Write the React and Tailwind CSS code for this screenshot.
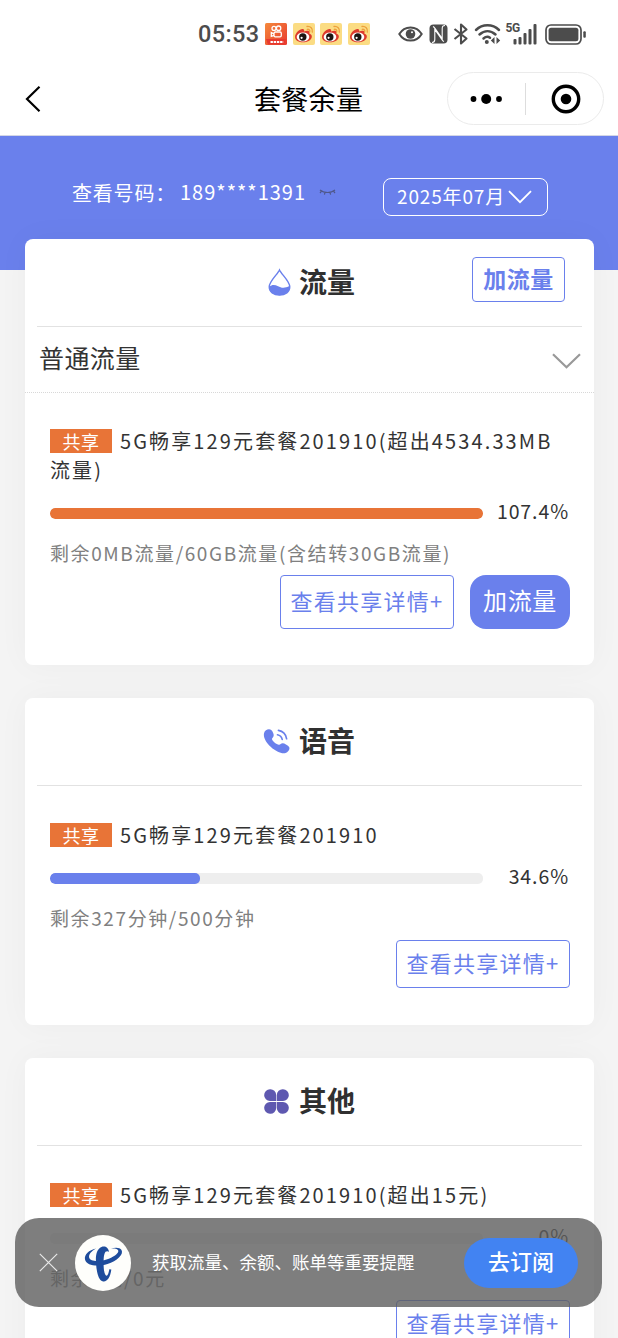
import React from "react";

const FONT = "font-['Noto_Sans_CJK_SC',sans-serif]";

function KuaishouIcon() {
  return (
    <svg className="h-[22px] w-[22px]" viewBox="0 0 22 22">
      <defs>
        <linearGradient id="ks" x1="0" y1="0" x2="1" y2="1">
          <stop offset="0" stopColor="#f58a3c" />
          <stop offset="1" stopColor="#e8392f" />
        </linearGradient>
      </defs>
      <rect width="22" height="22" rx="1.5" fill="url(#ks)" />
      <g fill="none" stroke="#fff" strokeWidth="1.3">
        <circle cx="9" cy="5.400" r="2" />
        <circle cx="13.600" cy="5.200" r="2.200" />
        <rect x="9" y="9" width="7.300" height="4.800" rx="1.300" />
        <path d="M9 10.800 6.300 9.600v3.800L9 12.300" />
      </g>
      <path d="M1 16h20l-2 5.500H3z" fill="#e8392f" />
      <path d="M5.500 19h13" stroke="#fff" strokeWidth="2.200" strokeDasharray="2.400 .8" />
    </svg>
  );
}

function WeiboIcon() {
  return (
    <svg className="h-[22px] w-[22px]" viewBox="0 0 22 22">
      <rect width="22" height="22" rx="2" fill="#fbdc83" />
      <path d="M2 14c0-4 5-8.500 8-8 1.500.3 1.300 1.800 1 2.500 2-1 5-1.500 5.500.5.200 1-.1 1.500-.1 1.800 2 .7 2.600 1.700 2.400 3.200C18.300 17.500 14 19.300 10 19.300S2 17.500 2 14z" fill="#dd3a2c" />
      <ellipse cx="10" cy="14" rx="6.300" ry="4.500" fill="#fff" />
      <circle cx="9.800" cy="14" r="3.700" fill="#1c1512" />
      <circle cx="8.600" cy="14.800" r="1.100" fill="#fff" />
      <path d="M14 3.500c3.500-.5 6 2 5.300 5.500M14.300 6.300c1.700-.2 2.700.8 2.400 2.300" fill="none" stroke="#eda03c" strokeWidth="1.300" strokeLinecap="round" />
    </svg>
  );
}

function StatusBar() {
  return (
    <div className="flex h-[68px] items-center pl-[198px] text-[#4c4c4c]">
      <span className="w-[67px] pt-[1px] font-[Roboto,sans-serif] text-[23.500px] font-medium tracking-[0.400px]">05:53</span>
      <div className="flex items-center gap-[5.500px]">
        <KuaishouIcon />
        <WeiboIcon />
        <WeiboIcon />
        <WeiboIcon />
      </div>
      <svg className="ml-[28px] h-[18px] w-[25px]" viewBox="0 0 25 18" fill="none" stroke="currentColor" strokeWidth="2">
        <path d="M1.300 9C6.500.2 18.500.2 23.700 9 18.500 17.800 6.500 17.800 1.300 9z" />
        <circle cx="12.500" cy="9" r="4.800" fill="currentColor" stroke="none" />
        <circle cx="14" cy="7.300" r="1" fill="#fff" stroke="none" />
      </svg>
      <svg className="ml-[6px] h-[20px] w-[19px]" viewBox="0 0 19 20">
        <rect x=".5" y=".5" width="18" height="19" rx="4" fill="currentColor" />
        <path d="M3 18.500c1.800 0 2.800-.8 2.800-3V5.500l6.700 9.500c1 1.400 1.300 2 2.500 2.500M16 1.500c-1.800 0-2.800.8-2.800 3v10L6.500 5C5.500 3.600 5.200 3 4 2.500" fill="none" stroke="#fff" strokeWidth="1.100" />
      </svg>
      <svg className="ml-[5px] h-[22px] w-[16px]" viewBox="0 0 16 22" fill="none" stroke="currentColor" strokeWidth="2.100" strokeLinejoin="round">
        <path d="M1.500 6 13.500 15.500 8 20.500v-19l5.500 5L1.500 16" />
      </svg>
      <svg className="ml-[5px] h-[22px] w-[27px]" viewBox="0 0 27 22" fill="none" stroke="currentColor" strokeWidth="2.500" strokeLinecap="round">
        <path d="M2 7C8.500.7 18.500.7 25 7M5.500 11.500c5-4.500 11-4.500 16 0M9.500 15.500c2.300-2 4.500-2.200 6.500-.8" />
        <circle cx="12.800" cy="19" r="2" fill="currentColor" stroke="none" />
        <path d="M20.500 14v7l-3.700-3.500zM22.500 14v7l3.700-3.500z" fill="currentColor" stroke="none" />
      </svg>
      <div className="relative ml-[4px] h-[22px] w-[32px]">
        <span className="absolute -top-[1px] left-px font-[Roboto,sans-serif] text-[12px] leading-[12px] font-bold tracking-[-0.500px]">5G</span>
        <svg className="h-[22px] w-[32px]" viewBox="0 0 32 22" fill="currentColor">
          <rect x="8.500" y="16" width="3" height="5.500" rx="1" />
          <rect x="13.500" y="14" width="3" height="7.500" rx="1" />
          <rect x="18.500" y="10" width="3" height="11.500" rx="1" />
          <rect x="23.500" y="6" width="3" height="15.500" rx="1" />
          <rect x="28.500" y="1" width="3" height="20.500" rx="1" />
        </svg>
      </div>
      <svg className="ml-[8px] h-[21px] w-[42px]" viewBox="0 0 42 21">
        <rect x="1" y="1" width="35" height="19" rx="5" fill="none" stroke="currentColor" strokeWidth="1.700" />
        <rect x="3.600" y="3.800" width="29.800" height="13.400" rx="2.500" fill="currentColor" />
        <rect x="38.300" y="7.300" width="2.500" height="6.500" rx="1" fill="currentColor" />
      </svg>
    </div>
  );
}

function NavBar() {
  return (
    <div className="flex h-[68px] items-start border-b border-[#d3d6e6]">
      <svg className="mt-[17px] ml-[25px] h-[28px] w-[17px]" viewBox="0 0 17 28" fill="none" stroke="#000" strokeWidth="2.200">
        <path d="M14.500 1.800 2 14l12.500 12.200" />
      </svg>
      <h1 className="mt-[11px] ml-[212px] w-[193px] text-[27px] leading-[40px] tracking-[0.300px] text-black">套餐余量</h1>
      <div className="mt-[4px] flex h-[53px] w-[157px] items-center rounded-full border border-[#ebebeb]">
        <svg className="h-[20px] w-[77px]" viewBox="0 0 77 20" fill="#000">
          <circle cx="25.500" cy="10" r="2.900" />
          <circle cx="38.200" cy="10" r="5" />
          <circle cx="51" cy="10" r="2.900" />
        </svg>
        <span className="h-[32px] w-px bg-[#dddddd]" />
        <svg className="ml-[25px] h-[30px] w-[30px]" viewBox="0 0 30 30">
          <circle cx="15" cy="15" r="12.700" fill="none" stroke="#000" strokeWidth="3.400" />
          <circle cx="15" cy="15" r="5.300" fill="#000" />
        </svg>
      </div>
    </div>
  );
}

function DropIcon() {
  return (
    <svg className="ml-[6px] h-[29px] w-[24px]" viewBox="0 0 24 29">
      <path d="M12 1.500C14 6 22.700 13 22.700 19c0 5.200-4.700 8.700-10.700 8.700S1.300 24.200 1.300 19C1.300 13 10 6 12 1.500z" fill="#fff" stroke="#6a80ec" strokeWidth="1.500" />
      <path d="M1.300 19c3-2.800 6-2.300 9.200-.6s6.500 2.800 12.200-.4c.3 6-4.500 9.700-10.700 9.700S1 24.500 1.300 19z" fill="#6a80ec" />
    </svg>
  );
}

function PhoneIcon() {
  return (
    <svg className="mb-px ml-px h-[26px] w-[28px]" viewBox="0 0 29 27">
      <path d="M1.200 5C2 1.800 6.500.2 8.800 2.400c1.200 1.300 2.300 3.600 2.300 5.100 0 2.200-2.100 2.700-1.800 4.200.6 2.200 4.700 5.400 7.200 5.700 1.500.2 2-1.600 4-1.500 1.700.1 5 1.900 6.400 3.500 1.600 2.100-.5 5.700-3.500 6.500C15.500 28.200-1.800 14 1.200 5z" fill="#6a80ec" />
      <g fill="none" stroke="#6a80ec" strokeWidth="1.700" strokeLinecap="round">
        <path d="M15 7c2.800.6 4.300 2.200 4.900 4.800M16 2.500c4.500.8 7.700 4 8.500 8.700" />
      </g>
    </svg>
  );
}

function CloverIcon() {
  return (
    <svg className="mb-px h-[25px] w-[25px]" viewBox="0 0 25 25" fill="#5e58b0">
      <path d="M6 .3a5.800 5.800 0 0 1 6.200 5.800v5.900H6A5.800 5.800 0 0 1 6 .3z" />
      <path d="M19 .3a5.800 5.800 0 0 0-6.200 5.800v5.900H19A5.800 5.800 0 0 0 19 .3z" />
      <path d="M6 24.700a5.800 5.800 0 0 0 6.200-5.800v-5.900H6a5.800 5.800 0 0 0 0 11.700z" />
      <path d="M19 24.700a5.800 5.800 0 0 1-6.200-5.800v-5.900H19a5.800 5.800 0 0 1 0 11.700z" />
    </svg>
  );
}

function Card({ icon, title, action, children }) {
  return (
    <section className="rounded-[8px] bg-white shadow-[0_0_33px_rgba(0,0,0,0.035)]">
      <div className="mx-[12px] grid h-[88px] grid-cols-[1fr_auto_1fr] items-center border-b border-[#e2e2e2]">
        <span />
        <div className="mr-[2px] flex items-center gap-[8px]">
          <span className="flex w-[29px] justify-center">{icon}</span>
          <h2 className="pb-[3px] text-[28px] leading-[40px] font-bold text-[#303030]">{title}</h2>
        </div>
        <div className="flex justify-end pr-[17px] pb-[6px]">{action}</div>
      </div>
      {children}
    </section>
  );
}

function UsageItem({ name, percent, width, barClass, remaining, children }) {
  return (
    <div className="pr-[24px] pl-[25px]">
      <div className="text-[20px] leading-[29px] tracking-[2.120px] text-[#333]">
        <span className="mt-[3px] mr-[8px] inline-flex h-[24px] w-[62px] items-center justify-center bg-[#e87437] pb-px align-top text-[18px] leading-[24px] tracking-[0.500px] text-white">
          共享
        </span>
        {name}
      </div>
      <div className="mt-[17px] flex h-[24px] items-center justify-between">
        <div className="h-[11px] w-[433px] overflow-hidden rounded-[5px] bg-[#eeeeee]">
          <div className={`h-full rounded-[5px] ${barClass}`} style={{ width }} />
        </div>
        <span className="-mt-[4px] mr-px text-[19.500px] leading-[24px] tracking-[0.900px] text-[#333]">{percent}</span>
      </div>
      <p className="mt-[14px] h-[28px] text-[19px] leading-[28px] tracking-[1.600px] whitespace-nowrap text-[#808080]">{remaining}</p>
      <div className="mt-[8px] flex justify-end gap-[16px]">{children}</div>
    </div>
  );
}

function DetailButton({ className }) {
  return (
    <button className={`w-[174px] rounded-[4px] border-[1.500px] border-[#6a80ec] pb-[3px] text-[22px] tracking-[1.250px] whitespace-nowrap text-[#6a80ec] ${className}`}>
      查看共享详情+
    </button>
  );
}

function SubscribeBar() {
  return (
    <div className="absolute top-[1218px] left-[15px] flex h-[89px] w-[587px] items-center rounded-[24px] bg-[#5e5e5e]/80 text-white">
      <svg className="ml-[24px] h-[19px] w-[19px]" viewBox="0 0 19 19" stroke="#e8e8e8" strokeWidth="1.200">
        <path d="m.8.8 17.400 17.400M18.200.8.8 18.200" />
      </svg>
      <svg className="ml-[17px] h-[56px] w-[56px]" viewBox="0 0 56 56">
        <circle cx="28" cy="28" r="28" fill="#fefefb" />
        <g fill="#1e4c9c">
          <path d="M21 13.500C14 15 9 19.500 10 24.500c1.500 6.500 13 7.500 22.500 4.500C42 26 49 19.500 46.500 15c-1.500-2.600-6-2.800-10.500-1.500 4-.2 7 .3 7.300 2.300.4 3-5.300 6.700-11.800 8.700-7.500 2.200-16 2.300-17.300-1.800C13.300 19.500 16.500 16 21 13.500z" />
          <path d="M34 17c-.3-4.500-4.300-6.500-7.500-5-5 2.300-6 8.500-5.500 16 .5 8.500 2.300 17 6.500 18.200C32 47.500 35.500 42 36.300 34.500l-2-.3c-.5 3.300-1.300 6-2.500 6.500-2.200.3-3.200-5.700-3.200-12.200 0-6 .3-9.500 1.900-11.800 1.500-1 3-.5 3.500.3z" />
        </g>
      </svg>
      <p className="ml-[21px] w-[312px] pb-[2px] text-[17.500px] leading-[26px] whitespace-nowrap">获取流量、余额、账单等重要提醒</p>
      <button className="h-[50px] w-[114px] rounded-full bg-[#4283f2] pb-[4px] text-[22px] font-medium">去订阅</button>
    </div>
  );
}

export default function App() {
  return (
    <div className={`relative h-[1338px] w-[618px] overflow-hidden bg-[#f4f4f4] ${FONT}`}>
      <header className="bg-white">
        <StatusBar />
        <NavBar />
      </header>
      <div className="flex h-[134px] items-start bg-[#6a80ec] text-white">
        <p className="mt-[42px] ml-[72px] w-[108px] text-[20px] leading-[30px] tracking-[0.800px] whitespace-nowrap">查看号码：</p>
        <p className="mt-[41px] w-[133px] text-[20px] leading-[30px] tracking-[1px]">189****1391</p>
        <svg className="mt-[52px] ml-[6px] h-[8px] w-[17px]" viewBox="0 0 17 8" fill="none" stroke="#4f5789" strokeWidth="1.200">
          <path d="M1 2c4 3.300 11 3.300 15 0M2.500 3.200 1 5M6 4.700l-.6 2M11 4.700l.6 2M14.500 3.200 16 5" />
        </svg>
        <button className="mt-[42px] ml-[47px] flex h-[38px] w-[165px] items-center rounded-[8px] border-[1.500px] border-white pl-[13px]">
          <span className="pb-[2px] text-[19px] tracking-[0.850px] whitespace-nowrap">2025年07月</span>
          <svg className="ml-[3px] h-[14px] w-[24px] shrink-0" viewBox="0 0 24 14" fill="none" stroke="#fff" strokeWidth="1.800">
            <path d="M1 1.200 12 12.200l11-11" />
          </svg>
        </button>
      </div>
      <main className="-mt-[31px] flex flex-col gap-[33px] pr-[24px] pl-[25px]">
        <Card
          icon={<DropIcon />}
          title="流量"
          action={
            <button className="h-[45px] w-[93px] rounded-[4px] border-[1.500px] border-[#6a80ec] pb-[4px] text-[23px] leading-[36px] font-bold tracking-[0.500px] text-[#6a80ec]">
              加流量
            </button>
          }
        >
          <div className="flex h-[66px] items-center justify-between border-b border-dotted border-[#d8d8d8] pr-[13px] pl-[14px]">
            <span className="pb-[3px] text-[25px] tracking-[0.400px] text-[#333]">普通流量</span>
            <svg className="mt-[3px] h-[16px] w-[29px]" viewBox="0 0 29 16" fill="none" stroke="#999" strokeWidth="2.200">
              <path d="m1 1.200 13.500 13 13.500-13" />
            </svg>
          </div>
          <div className="pt-[33px] pb-[36px]">
            <UsageItem
              name={<>5G畅享129元套餐201910(超出4534.33MB<br />流量)</>}
              percent="107.4%"
              width="100%"
              barClass="bg-[#e87437]"
              remaining="剩余0MB流量/60GB流量(含结转30GB流量)"
            >
              <DetailButton className="h-[54px]" />
              <button className="h-[54px] w-[100px] rounded-[16px] bg-[#6a80ec] pb-[4px] text-[24px] tracking-[0.600px] text-white">加流量</button>
            </UsageItem>
          </div>
        </Card>
        <Card icon={<PhoneIcon />} title="语音">
          <div className="pt-[34px] pb-[37px]">
            <UsageItem
              name="5G畅享129元套餐201910"
              percent="34.6%"
              width="34.6%"
              barClass="bg-[#6a80ec]"
              remaining="剩余327分钟/500分钟"
            >
              <DetailButton className="h-[48px]" />
            </UsageItem>
          </div>
        </Card>
        <Card icon={<CloverIcon />} title="其他">
          <div className="pt-[34px] pb-[37px]">
            <UsageItem
              name="5G畅享129元套餐201910(超出15元)"
              percent="0%"
              width="0%"
              barClass="bg-[#6a80ec]"
              remaining="剩余0元/0元"
            >
              <DetailButton className="h-[48px]" />
            </UsageItem>
          </div>
        </Card>
      </main>
      <SubscribeBar />
    </div>
  );
}
